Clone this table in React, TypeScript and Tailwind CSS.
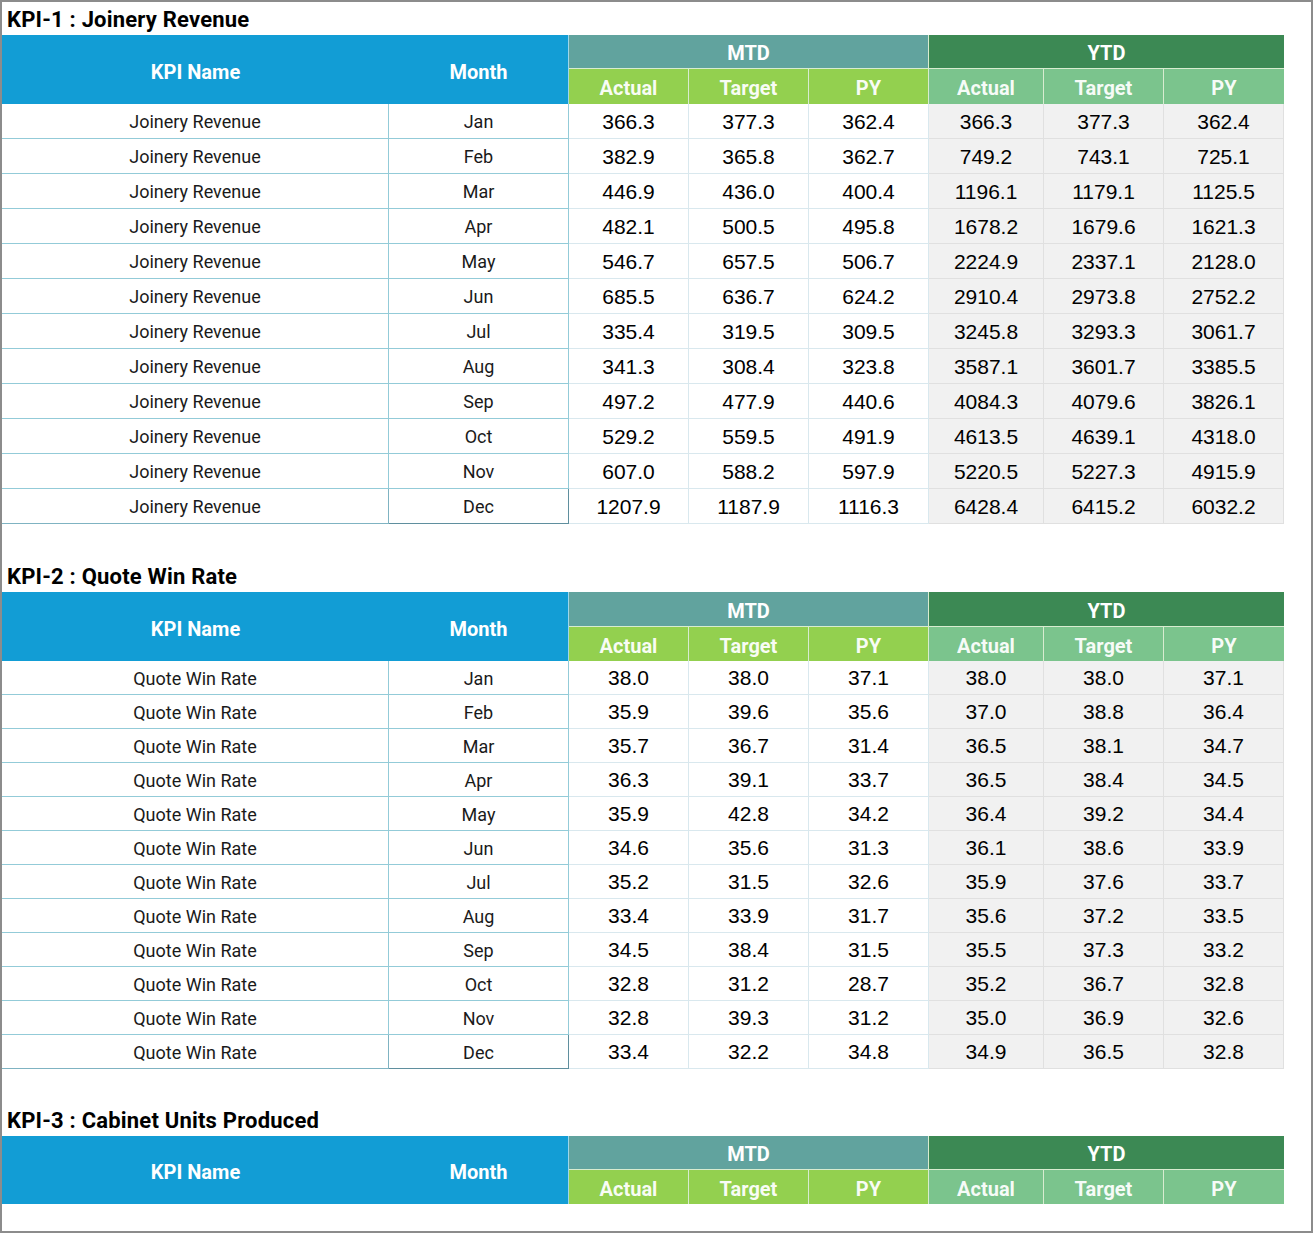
import React from "react";

type Row = [string, string, string, string, string, string, string];

const kpi1: Row[] = [
  ["Jan", "366.3", "377.3", "362.4", "366.3", "377.3", "362.4"],
  ["Feb", "382.9", "365.8", "362.7", "749.2", "743.1", "725.1"],
  ["Mar", "446.9", "436.0", "400.4", "1196.1", "1179.1", "1125.5"],
  ["Apr", "482.1", "500.5", "495.8", "1678.2", "1679.6", "1621.3"],
  ["May", "546.7", "657.5", "506.7", "2224.9", "2337.1", "2128.0"],
  ["Jun", "685.5", "636.7", "624.2", "2910.4", "2973.8", "2752.2"],
  ["Jul", "335.4", "319.5", "309.5", "3245.8", "3293.3", "3061.7"],
  ["Aug", "341.3", "308.4", "323.8", "3587.1", "3601.7", "3385.5"],
  ["Sep", "497.2", "477.9", "440.6", "4084.3", "4079.6", "3826.1"],
  ["Oct", "529.2", "559.5", "491.9", "4613.5", "4639.1", "4318.0"],
  ["Nov", "607.0", "588.2", "597.9", "5220.5", "5227.3", "4915.9"],
  ["Dec", "1207.9", "1187.9", "1116.3", "6428.4", "6415.2", "6032.2"],
];

const kpi2: Row[] = [
  ["Jan", "38.0", "38.0", "37.1", "38.0", "38.0", "37.1"],
  ["Feb", "35.9", "39.6", "35.6", "37.0", "38.8", "36.4"],
  ["Mar", "35.7", "36.7", "31.4", "36.5", "38.1", "34.7"],
  ["Apr", "36.3", "39.1", "33.7", "36.5", "38.4", "34.5"],
  ["May", "35.9", "42.8", "34.2", "36.4", "39.2", "34.4"],
  ["Jun", "34.6", "35.6", "31.3", "36.1", "38.6", "33.9"],
  ["Jul", "35.2", "31.5", "32.6", "35.9", "37.6", "33.7"],
  ["Aug", "33.4", "33.9", "31.7", "35.6", "37.2", "33.5"],
  ["Sep", "34.5", "38.4", "31.5", "35.5", "37.3", "33.2"],
  ["Oct", "32.8", "31.2", "28.7", "35.2", "36.7", "32.8"],
  ["Nov", "32.8", "39.3", "31.2", "35.0", "36.9", "32.6"],
  ["Dec", "33.4", "32.2", "34.8", "34.9", "36.5", "32.8"],
];

const cols = "grid grid-cols-[387px_180px_120px_120px_120px_115px_120px_120px] w-[1282px]";

// Section title above each table
const Title = ({ text, className }: { text: string; className: string }) => (
  <div
    className={`flex items-end pl-[5px] pb-[4px] text-[22px] font-bold text-black leading-none tracking-[0.2px] font-['Roboto',sans-serif] ${className}`}
  >
    {text}
  </div>
);

const Header = ({ top, bottom }: { top: string; bottom: string }) => {
  const sub = `flex items-center justify-center pt-[3px] ${bottom} text-[20px] font-bold text-white/95 border-r border-[#d8ecd0]`;
  return (
    <div className={`${cols} font-['Roboto',sans-serif]`}>
      <div className="row-span-2 flex items-center justify-center pt-[4px] bg-[#129dd5] text-white text-[20px] font-bold">
        KPI Name
      </div>
      <div className="row-span-2 flex items-center justify-center pt-[4px] bg-[#129dd5] text-white text-[20px] font-bold border-r border-[#9fd6ea]">
        Month
      </div>
      <div
        className={`col-span-3 ${top} flex items-center justify-center pt-[3px] bg-[#61a39e] text-white text-[20px] font-bold border-r border-b border-[#d8ecd0]`}
      >
        MTD
      </div>
      <div
        className={`col-span-3 ${top} flex items-center justify-center pt-[3px] bg-[#3c8954] text-white text-[20px] font-bold border-b border-[#d8ecd0]`}
      >
        YTD
      </div>
      <div className={`${sub} bg-[#93d04f]`}>Actual</div>
      <div className={`${sub} bg-[#93d04f]`}>Target</div>
      <div className={`${sub} bg-[#93d04f]`}>PY</div>
      <div className={`${sub} bg-[#7bc48d]`}>Actual</div>
      <div className={`${sub} bg-[#7bc48d]`}>Target</div>
      <div className={`${sub} bg-[#7bc48d] border-r-0`}>PY</div>
    </div>
  );
};

const Body = ({ name, rows, h }: { name: string; rows: Row[]; h: string }) => (
  <div className={cols}>
    {rows.map((r, i) => {
      const last = i === rows.length - 1;
      const nameB = last ? "border-[#7fb3c2]" : "border-[#93cbd8]";
      return (
        <React.Fragment key={r[0]}>
          <div
            className={`${h} flex items-center justify-center pt-[1px] border-b border-r ${nameB} text-[18px] text-[#1a1a1a] font-['Roboto',sans-serif]`}
          >
            {name}
          </div>
          <div
            className={`${h} flex items-center justify-center pt-[1px] border-b border-r ${last ? "border-[#5f8f9e]" : "border-[#93cbd8]"} text-[18px] text-[#1a1a1a] font-['Roboto',sans-serif]`}
          >
            {r[0]}
          </div>
          {r.slice(1, 4).map((v, j) => (
            <div
              key={`m${j}`}
              className={`${h} flex items-center justify-center pt-[1px] border-b border-r border-[#d9e8ee] text-[21px] text-black font-['Liberation_Sans',Arial,sans-serif]`}
            >
              {v}
            </div>
          ))}
          {r.slice(4).map((v, j) => (
            <div
              key={`y${j}`}
              className={`${h} flex items-center justify-center pt-[1px] bg-[#f1f1f1] border-b border-r border-[#e0e0e0] text-[21px] text-black font-['Liberation_Sans',Arial,sans-serif]`}
            >
              {v}
            </div>
          ))}
        </React.Fragment>
      );
    })}
  </div>
);

export default function App() {
  return (
    <div className="w-[1313px] h-[1233px] bg-white border-2 border-[#8c8c8c] overflow-hidden">
      <Title text="KPI-1 : Joinery Revenue" className="h-[33px]" />
      <Header top="h-[34px]" bottom="h-[35px]" />
      <Body name="Joinery Revenue" rows={kpi1} h="h-[35px]" />

      <Title text="KPI-2 : Quote Win Rate" className="h-[68px]" />
      <Header top="h-[35px]" bottom="h-[34px]" />
      <Body name="Quote Win Rate" rows={kpi2} h="h-[34px]" />

      <Title text="KPI-3 : Cabinet Units Produced" className="h-[67px]" />
      <Header top="h-[34px]" bottom="h-[34px]" />
    </div>
  );
}
